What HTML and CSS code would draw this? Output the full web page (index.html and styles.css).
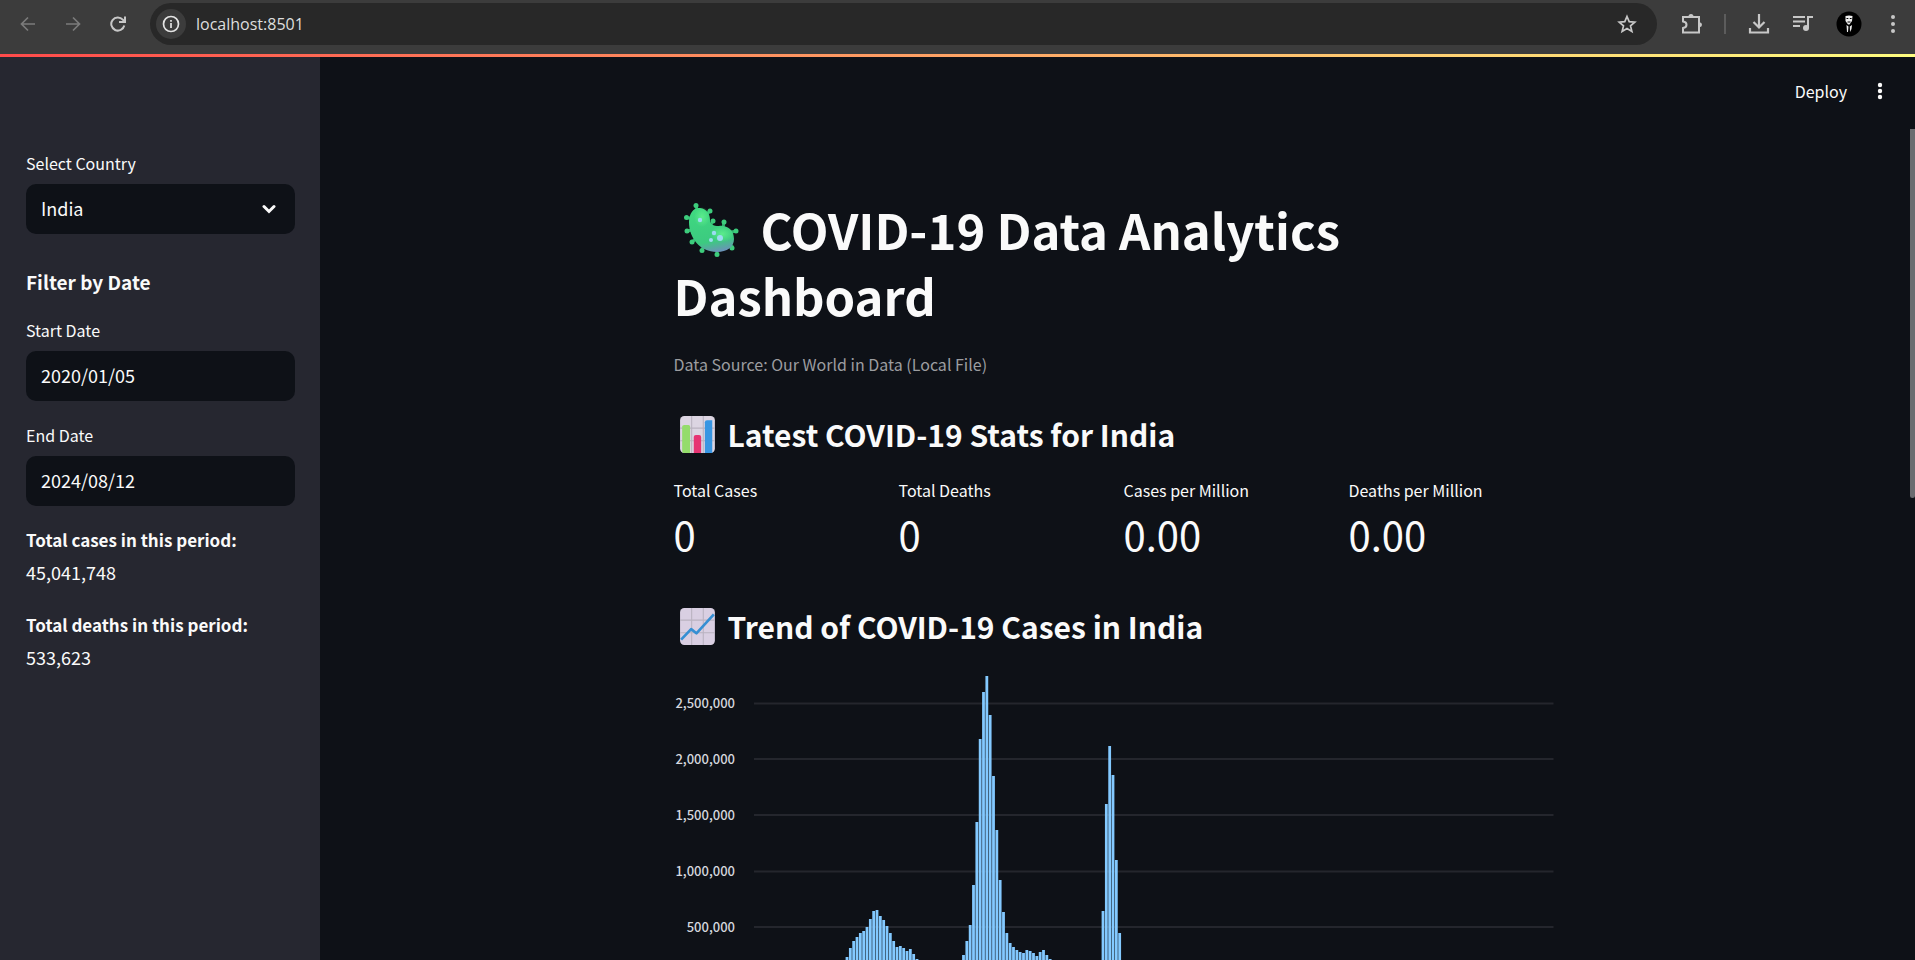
FILE: index.html
```html
<!DOCTYPE html>
<html lang="en">
<head>
<meta charset="utf-8">
<title>COVID-19 Data Analytics Dashboard</title>
<link rel="stylesheet" href="styles.css">
</head>
<body>
<header class="browser">
  <nav class="browser-nav">
    <button class="tool dim" aria-label="Back"><svg width="16" height="16" viewBox="0 0 16 16"><path d="M15 8H2M8 1.500L1.500 8L8 14.500"/></svg></button>
    <button class="tool dim" aria-label="Forward"><svg width="16" height="16" viewBox="0 0 16 16"><path d="M1 8H14M8 1.500L14.500 8L8 14.500"/></svg></button>
    <button class="tool" aria-label="Reload"><svg width="16" height="16" viewBox="0 0 16 16"><path stroke-width="2" d="M14.300 9.500A6.600 6.600 0 1 1 12.800 3.600L14.500 5.500M15 0.500V6H9"/></svg></button>
  </nav>
  <div class="address">
    <button class="site-info" aria-label="Site information"><svg width="18" height="18" viewBox="0 0 18 18"><circle cx="9" cy="9" r="7.500"/><path d="M9 8V13M9 5V6.800"/></svg></button>
    <input class="url" aria-label="Address" value="localhost:8501">
    <button class="tool" aria-label="Bookmark"><svg width="20" height="20" viewBox="0 0 20 20"><path stroke-width="1.700" d="M10 2.500L12.200 7.700L17.800 8.200L13.500 11.900L14.900 17.400L10 14.500L5.100 17.400L6.500 11.900L2.200 8.200L7.800 7.700Z"/></svg></button>
  </div>
  <div class="browser-actions">
    <button class="tool" aria-label="Extensions"><svg width="22" height="22" viewBox="0 0 22 22"><path stroke-width="2" d="M2 4H18V19.500H2V15Q5.500 14.500 5.500 11.700Q5.500 9 2 8.500Z"/><path class="fill" d="M7.500 3.500A2.500 2.500 0 0 1 12.500 3.500ZM18.500 9.200A2.500 2.500 0 0 1 18.500 14.200Z"/></svg></button>
    <span class="divider"></span>
    <button class="tool" aria-label="Downloads"><svg width="22" height="22" viewBox="0 0 22 22"><path stroke-width="2.200" d="M11 1V14M5.500 9L11 14.500L16.500 9M2 15V19.500H20V15"/></svg></button>
    <button class="tool" aria-label="Media"><svg width="22" height="18" viewBox="0 0 22 18"><path stroke-width="2" d="M1 2H13M1 6.500H13M1 11H8M16 13V2H21"/><circle class="fill" cx="14" cy="13" r="3"/></svg></button>
    <button class="tool" aria-label="Profile"><svg width="26" height="26" viewBox="0 0 26 26"><circle cx="13" cy="13" r="12.500" class="avatar"/><path class="face" d="M9.500 5Q13 4 16.500 5L16 10L13.500 13.500H12L9.500 10ZM10.500 14L12.500 15.500L12 21H11ZM16 14L13.800 15.500L14 21L15.500 18Z"/><path stroke="#000" stroke-width="1" d="M10.500 7.500H12.300M13.800 7.500H15.600M11.500 11H14.500"/></svg></button>
    <button class="tool browser-menu" aria-label="Browser menu"><svg width="6" height="20" viewBox="0 0 6 20"><g class="fill"><circle cx="3" cy="3" r="2"/><circle cx="3" cy="10" r="2"/><circle cx="3" cy="17" r="2"/></g></svg></button>
  </div>
</header>
<div class="decoration"></div>
<div class="app">
  <aside class="sidebar">
    <div class="field">
      <label for="country">Select Country</label>
      <div class="select-wrap">
        <select id="country"><option>India</option></select>
        <svg class="chevron" width="14" height="10" viewBox="0 0 14 10"><path d="M2 2.500L7 7.500L12 2.500"/></svg>
      </div>
    </div>
    <h2>Filter by Date</h2>
    <div class="field">
      <label for="start">Start Date</label>
      <input id="start" type="text" value="2020/01/05">
    </div>
    <div class="field">
      <label for="end">End Date</label>
      <input id="end" type="text" value="2024/08/12">
    </div>
    <div class="totals">
      <p><strong>Total cases in this period:</strong><br>45,041,748</p>
      <p><strong>Total deaths in this period:</strong><br>533,623</p>
    </div>
  </aside>
  <main class="main">
    <div class="toolbar">
      <button class="deploy">Deploy</button>
      <button class="kebab" aria-label="Menu"><svg width="6" height="18" viewBox="0 0 6 18"><circle cx="3" cy="3" r="2.200"/><circle cx="3" cy="9" r="2.200"/><circle cx="3" cy="15" r="2.200"/></svg></button>
    </div>
    <div class="content">
      <h1><svg class="emoji-lg" viewBox="0 0 56 56" aria-hidden="true">
        <defs>
          <linearGradient id="g" x1=".4" y1="0" x2=".6" y2="1"><stop offset="0" stop-color="#3fd880"/><stop offset=".75" stop-color="#3cca80"/><stop offset="1" stop-color="#6b93b8"/></linearGradient>
          <radialGradient id="hl"><stop offset="0" stop-color="#5cec8c"/><stop offset="1" stop-color="#5cec8c" stop-opacity="0"/></radialGradient>
        </defs>
        <path stroke="#2fae6c" stroke-width="3" fill="none" d="M14 8L13 3M22 14L27 9M9 16L3 16M9 28L4 29M14 36L9 40M21 43L19 48M34 46L34 51M43 41L50 45M48 30L54 29M40 26L41 20M27 24L30 19"/>
        <g fill="#3dcc7c"><circle cx="13" cy="3.500" r="2.500"/><circle cx="27" cy="9" r="2.500"/><circle cx="3.500" cy="15.500" r="2.500"/><circle cx="4" cy="29" r="2.500"/><circle cx="9" cy="40" r="2.500"/><circle cx="19" cy="48.500" r="2.500"/><circle cx="34" cy="52.500" r="2.500"/><circle cx="49" cy="46" r="2.500"/><circle cx="53" cy="29" r="2.500"/><circle cx="41" cy="20" r="2.500"/><circle cx="30" cy="19" r="2.500"/></g>
        <path fill="url(#g)" d="M6 20C6 11 11 5 17 6C24 7 27 12 27 18C27 22 30 24 36 24C44 23 51 28 51 37C51 45 44 50 34 50C17 50 6 36 6 20Z"/>
        <ellipse cx="19" cy="15" rx="8" ry="10" fill="url(#hl)"/><ellipse cx="39" cy="32" rx="12" ry="8" fill="url(#hl)"/>
        <g fill="#9cdcf2"><circle cx="17" cy="18" r="2.200"/><circle cx="31" cy="31" r="2.200"/><circle cx="37" cy="36" r="3"/><circle cx="28" cy="38" r="2"/></g>
      </svg>COVID-19 Data Analytics Dashboard</h1>
      <p class="caption">Data Source: Our World in Data (Local File)</p>
      <h3><svg class="emoji" viewBox="0 0 34 36" aria-hidden="true"><rect width="33" height="35" rx="4" fill="#dcd5e2"/><path stroke="#b9b2c0" d="M11 0V35M22 0V35M0 11.500H33M0 23.500H33"/><path fill="#94dc6b" d="M2 10Q2 8.500 4 8.500H8Q9.500 8.500 9.500 10V35H3Q2 35 2 33Z"/><path fill="#e63473" d="M13 20Q13 18 15 18H18Q20 18 20 20V35H13Z"/><path fill="#3896e3" d="M23.500 6Q23.500 4 25.500 4H30.500V35H23.500Z"/></svg>Latest COVID-19 Stats for India</h3>
      <dl class="metrics">
        <div><dt>Total Cases</dt><dd>0</dd></div>
        <div><dt>Total Deaths</dt><dd>0</dd></div>
        <div><dt>Cases per Million</dt><dd>0.00</dd></div>
        <div><dt>Deaths per Million</dt><dd>0.00</dd></div>
      </dl>
      <h3><svg class="emoji" viewBox="0 0 34 36" aria-hidden="true"><rect width="33" height="35" rx="4" fill="#d9cfe2"/><path stroke="#b9b2c0" d="M11 0V35M22 0V35M0 11.500H33M0 23.500H33"/><path fill="none" stroke="#358fd3" stroke-width="2.500" stroke-linejoin="round" d="M1 30L10.500 20L15.500 24L32 6"/></svg>Trend of COVID-19 Cases in India</h3>
      <svg class="chart" viewBox="0 0 880 438" role="img" aria-label="Cases in India over time">
        <path class="grid" d="M80 33.500H879.500M80 89H879.500M80 145H879.500M80 201.500H879.500M80 257H879.500"/>
        <g class="ticks"><text x="61" y="38">2,500,000</text><text x="61" y="94">2,000,000</text><text x="61" y="150">1,500,000</text><text x="61" y="206">1,000,000</text><text x="61" y="262">500,000</text></g>
        <path class="bars" id="bars"/>
      </svg>
    </div>
    <div class="scroll-thumb"></div>
  </main>
</div>
<script src="chart.js"></script>
</body>
</html>
```

FILE: styles.css
```css
* { box-sizing: border-box; }
body {
  margin: 0;
  height: 100vh;
  display: flex;
  flex-direction: column;
  overflow: hidden;
  background: #0e1117;
  color: #fafafa;
  font-family: "Noto Sans CJK SC", "Noto Sans", sans-serif;
  font-size: 18px;
  line-height: 32px;
}
button, input, select { font: inherit; color: inherit; border: 0; background: none; padding: 0; }
h1, h2, h3, p, dl, dd { margin: 0; }
svg { display: block; }

.browser {
  display: flex;
  align-items: center;
  flex: none;
  height: 54px;
  padding: 0 19px 6px 20px;
  gap: 24px;
  background: #3c3c3c;
}
.browser-nav { display: flex; gap: 29px; }
.tool svg { fill: none; stroke: #c7c7c7; stroke-width: 1.700; }
.dim svg { stroke: #7b7b7b; }
.tool .fill { fill: #c7c7c7; stroke: none; }
.tool .avatar { fill: #000; stroke: none; }
.tool .face { fill: #eee; stroke: none; }
.address {
  flex: 1;
  display: flex;
  align-items: center;
  height: 42px;
  padding: 0 20px 0 6px;
  gap: 10px;
  border-radius: 21px;
  background: #282828;
}
.site-info {
  width: 30px;
  height: 30px;
  display: grid;
  place-items: center;
  border-radius: 50%;
  background: #3c3c3c;
}
.site-info svg { fill: none; stroke: #e3e3e3; stroke-width: 1.700; }
.url { flex: 1; min-width: 0; font-family: "Open Sans", sans-serif; font-size: 16px; color: #dedede; }
.browser-actions { display: flex; align-items: center; gap: 22px; }
.browser-menu { margin-left: 6px; }
.divider { width: 2px; height: 20px; margin-left: -1px; background: #5c5c5c; }

.decoration { flex: none; height: 3px; background: linear-gradient(90deg, #ff4b4b, #fffd80); }
.app { flex: 1; min-height: 0; display: flex; }

.sidebar {
  flex: none;
  width: 320px;
  padding: 92px 25px 20px 26px;
  background: #262730;
  overflow: hidden;
}
.field { margin-bottom: 20px; }
.field label { display: block; font-size: 16px; line-height: 28px; margin-bottom: 7px; }
.field input, .field select {
  display: block;
  width: 100%;
  height: 50px;
  padding: 0 15px 2px;
  border-radius: 10px;
  background: #0e1117;
  appearance: none;
}
.select-wrap { position: relative; }
.chevron { position: absolute; right: 19px; top: 20px; fill: none; stroke: #fafafa; stroke-width: 3; stroke-linecap: round; }
.sidebar h2 { font-size: 19px; line-height: 28px; font-weight: 600; padding: 14px 0 20px; }
.totals { display: grid; gap: 20px; margin-top: -3px; }
.totals strong { font-size: 17px; font-weight: 600; }

.main { flex: 1; position: relative; overflow: hidden; padding-right: 8px; }
.toolbar { display: flex; justify-content: flex-end; align-items: center; height: 68px; padding-right: 24px; gap: 30px; }
.deploy { font-size: 16px; }
.kebab svg { fill: #fafafa; }
.content { max-width: 880px; margin: 0 auto; padding-top: 71px; }
h1 { font-size: 49px; line-height: 66px; font-weight: 700; padding-bottom: 22px; }
.emoji-lg { display: inline-block; width: 56px; height: 56px; margin: 0 22px 0 9px; vertical-align: -8px; }
.caption { font-size: 16px; line-height: 28px; color: #9c9da0; }
h3 { font-size: 30px; line-height: 42px; font-weight: 600; padding: 35px 0 21px; }
.emoji { display: inline-block; width: 36px; height: 38px; margin: 0 12px 0 6px; vertical-align: -7px; }
.metrics { display: grid; grid-template-columns: repeat(4, 1fr); gap: 20px; margin-bottom: 6px; }
.metrics dt { font-size: 16px; line-height: 28px; }
.metrics dd { font-size: 40px; line-height: 60px; }
.chart { width: 100%; height: auto; margin-top: 2px; }
.grid { stroke: #24262d; stroke-width: 2; }
.ticks { font-size: 13px; font-weight: 500; fill: #d5d7de; text-anchor: end; }
.bars { stroke: #83c9ff; stroke-width: 2.800; fill: none; }
.scroll-thumb { position: absolute; right: 0; top: 72px; width: 5px; height: 369px; border-radius: 0 0 3px 3px; background: #6b6c70; }
```

FILE: chart.js
```js
// Each run holds the x of its first bar and the top of every bar after it.
const runs = [
  { x: 173, tops: [287, 278, 271, 267, 263, 261, 257, 249, 241, 240, 246, 250, 256, 263, 271, 277, 276, 278, 281, 279, 284, 289] },
  { x: 289.500, tops: [285, 271, 255, 215, 152, 69, 22, 6, 45, 106, 160, 210, 242, 263, 273, 277, 280, 282, 283, 280, 281, 283, 286, 282, 280, 285, 289] },
  { x: 429, tops: [241, 134, 76, 105, 190, 263] }
];
const step = 10 / 3;
document.getElementById("bars").setAttribute("d", runs.map(run =>
  run.tops.map((top, i) => `M${(run.x + i * step).toFixed(2)} 438V${top}`).join("")
).join(""));
```
